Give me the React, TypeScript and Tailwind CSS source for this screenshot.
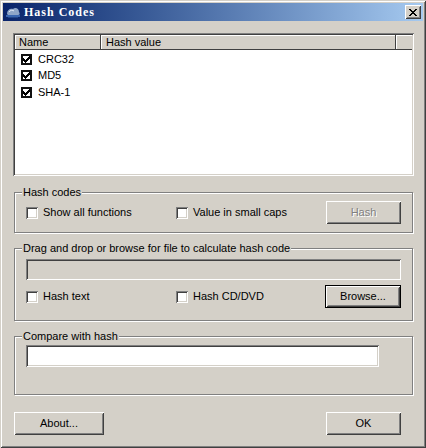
import React from "react";

const raised =
  "shadow-[inset_1px_1px_0_#ffffff,inset_-1px_-1px_0_#404040,inset_2px_2px_0_#d4d0c8,inset_-2px_-2px_0_#808080]";
const sunken =
  "shadow-[inset_1px_1px_0_#808080,inset_-1px_-1px_0_#ffffff,inset_2px_2px_0_#404040,inset_-2px_-2px_0_#d4d0c8]";

function CheckMark() {
  const px: [number, number][] = [
    [6, 0],
    [5, 1], [6, 1],
    [0, 2], [4, 2], [5, 2], [6, 2],
    [0, 3], [1, 3], [3, 3], [4, 3], [5, 3],
    [0, 4], [1, 4], [2, 4], [3, 4], [4, 4],
    [1, 5], [2, 5], [3, 5],
    [2, 6],
  ];
  return (
    <svg width="7" height="7" viewBox="0 0 7 7" shapeRendering="crispEdges">
      {px.map(([x, y], i) => (
        <rect key={i} x={x} y={y} width="1" height="1" fill="#000" />
      ))}
    </svg>
  );
}

function ListCheck() {
  return (
    <span className="flex h-[11px] w-[11px] shrink-0 items-center justify-center border-2 border-[#111] bg-white">
      <CheckMark />
    </span>
  );
}

function Check({ label, width }: { label: string; width?: string }) {
  return (
    <div className={`flex items-center ${width ?? ""}`}>
      <span className={`h-[12px] w-[12px] shrink-0 bg-white ${sunken}`} />
      <span className="ml-[5px] leading-[13px]">{label}</span>
    </div>
  );
}

function Group({
  legend,
  className,
  children,
}: {
  legend: string;
  className: string;
  children: React.ReactNode;
}) {
  return (
    <div
      className={`relative ml-[11px] w-[399px] border border-[#808080] shadow-[inset_1px_1px_0_#ffffff,1px_1px_0_#ffffff] ${className}`}
    >
      <span className="absolute left-[7px] top-[-7px] bg-[#d4d0c8] px-[1px] leading-[13px]">
        {legend}
      </span>
      {children}
    </div>
  );
}

export default function App() {
  return (
    <div
      className={`h-[448px] w-[426px] bg-[#d4d0c8] p-[3px] text-[11px] text-black font-['Liberation_Sans',Arial,sans-serif] shadow-[inset_1px_1px_0_#d4d0c8,inset_-1px_-1px_0_#404040,inset_2px_2px_0_#ffffff,inset_-2px_-2px_0_#808080]`}
    >
      {/* Title bar */}
      <div className="flex h-[18px] w-[420px] items-center bg-gradient-to-r from-[#0a246a] to-[#a6caf0]">
        <svg className="ml-[2px]" width="16" height="16" viewBox="0 0 16 16">
          <path d="M2 10 C2 6 5 4 8 5 C10 3 14 4 14 8 C15 9 15 11 13 11 L3 11 Z" fill="#8fa6c8" />
          <path d="M4 8 C5 6 8 6 9 7" stroke="#dfe8f5" strokeWidth="1" fill="none" />
          <rect x="1" y="11" width="14" height="2" fill="#3a66b0" />
          <rect x="3" y="13" width="10" height="1" fill="#21468a" />
        </svg>
        <span className="ml-[3px] text-[12px] font-bold leading-[14px] tracking-[1px] text-white font-['Liberation_Serif',serif]">
          Hash Codes
        </span>
        <div
          className={`ml-auto mr-[2px] flex h-[14px] w-[16px] items-center justify-center bg-[#d4d0c8] ${raised}`}
        >
          <svg width="8" height="7" viewBox="0 0 8 7" shapeRendering="crispEdges">
            <path d="M0 0h2v1h-2zM6 0h2v1h-2zM1 1h2v1h-2zM5 1h2v1h-2zM2 2h4v1h-4zM3 3h2v1h-2zM2 4h4v1h-4zM1 5h2v1h-2zM5 5h2v1h-2zM0 6h2v1h-2zM6 6h2v1h-2z" fill="#000" />
          </svg>
        </div>
      </div>

      {/* List view */}
      <div className={`ml-[10px] mt-[12px] h-[143px] w-[401px] bg-white p-[2px] ${sunken}`}>
        <div className="flex h-[15px] leading-[13px]">
          <div className="flex w-[86px] items-center border-b border-r border-[#404040] bg-[#d4d0c8] pl-[4px] shadow-[inset_1px_1px_0_#ffffff]">
            Name
          </div>
          <div className="flex w-[295px] items-center border-b border-r border-[#404040] bg-[#d4d0c8] pl-[5px] shadow-[inset_1px_1px_0_#ffffff]">
            Hash value
          </div>
          <div className="w-[16px] border-b border-[#404040] bg-[#d4d0c8] shadow-[inset_1px_1px_0_#ffffff]" />
        </div>
        <div className="pt-[1px]">
          {["CRC32", "MD5", "SHA-1"].map((n) => (
            <div key={n} className="flex h-[16.5px] items-center pl-[6px]">
              <ListCheck />
              <span className="ml-[6px] leading-[13px]">{n}</span>
            </div>
          ))}
        </div>
      </div>

      {/* Hash codes group */}
      <Group legend="Hash codes" className="mt-[16px] h-[41px]">
        <div className="flex items-center pl-[11px] pr-[11px] pt-[8px]">
          <Check label="Show all functions" width="w-[150px]" />
          <Check label="Value in small caps" />
          <div
            className={`ml-auto flex h-[23px] w-[75px] items-center justify-center bg-[#d4d0c8] text-[#808080] [text-shadow:1px_1px_0_#ffffff] ${raised}`}
          >
            Hash
          </div>
        </div>
      </Group>

      {/* Drag and drop group */}
      <Group
        legend="Drag and drop or browse for file to calculate hash code"
        className="mt-[15px] h-[73px]"
      >
        <div className="pl-[11px] pr-[11px] pt-[10px]">
          <div className={`h-[21px] w-[375px] bg-[#d4d0c8] ${sunken}`} />
          <div className="mt-[5px] flex items-center">
            <Check label="Hash text" width="w-[150px]" />
            <Check label="Hash CD/DVD" />
            <div className="ml-auto h-[23px] w-[76px] border border-black">
              <div className={`flex h-full w-full items-center justify-center bg-[#d4d0c8] ${raised}`}>
                Browse...
              </div>
            </div>
          </div>
        </div>
      </Group>

      {/* Compare group */}
      <Group legend="Compare with hash" className="mt-[15px] h-[59px]">
        <div className="pl-[11px] pt-[8px]">
          <div className={`h-[22px] w-[353px] bg-white ${sunken}`} />
        </div>
      </Group>

      {/* Bottom buttons */}
      <div className="ml-[11px] mt-[17px] flex w-[387px] justify-between">
        <div className={`flex h-[23px] w-[90px] items-center justify-center ${raised}`}>About...</div>
        <div className={`flex h-[23px] w-[75px] items-center justify-center ${raised}`}>OK</div>
      </div>
    </div>
  );
}
